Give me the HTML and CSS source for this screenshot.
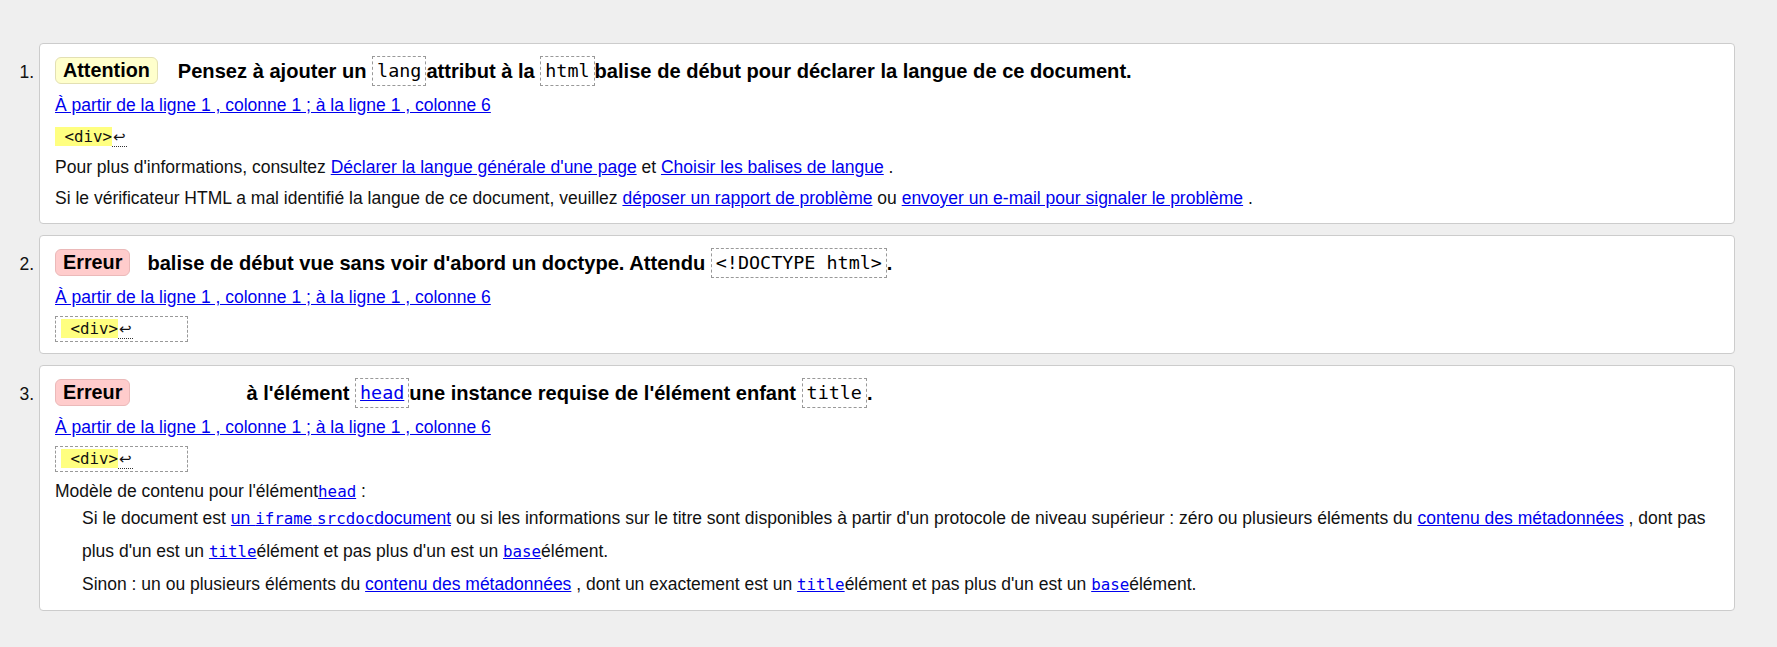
FILE: index.html
```html
<!DOCTYPE html>
<html lang="fr">
<head>
<meta charset="utf-8">
<title>Vérification</title>
<link rel="stylesheet" href="styles.css">
</head>
<body>
<ol class="messages">
  <li class="msg">
    <p class="msg-head"><span class="badge badge-warn">Attention</span><span class="msg-text">Pensez à ajouter un <code class="hcode">lang</code>attribut à la <code class="hcode">html</code>balise de début pour déclarer la langue de ce document.</span></p>
    <p class="line"><a href="#">À partir de la ligne 1 , colonne 1 ; à la ligne 1 , colonne 6</a></p>
    <p class="line"><span class="extract extract-plain"><span class="hl"> &lt;div&gt;</span><span class="lf">↩</span></span></p>
    <p class="line">Pour plus d'informations, consultez <a href="#">Déclarer la langue générale d'une page</a> et <a href="#">Choisir les balises de langue</a> .</p>
    <p class="line">Si le vérificateur HTML a mal identifié la langue de ce document, veuillez <a href="#">déposer un rapport de problème</a> ou <a href="#">envoyer un e-mail pour signaler le problème</a> .</p>
  </li>
  <li class="msg">
    <p class="msg-head"><span class="badge badge-err">Erreur</span><span class="msg-text">balise de début vue sans voir d'abord un doctype. Attendu <code class="hcode">&lt;!DOCTYPE html&gt;</code>.</span></p>
    <p class="line"><a href="#">À partir de la ligne 1 , colonne 1 ; à la ligne 1 , colonne 6</a></p>
    <p class="line line-box"><span class="extract"><span class="hl"> &lt;div&gt;</span><span class="lf">↩</span></span></p>
  </li>
  <li class="msg">
    <p class="msg-head"><span class="badge badge-err badge-wide">Erreur</span><span class="msg-text">à l'élément <code class="hcode"><a href="#">head</a></code>une instance requise de l'élément enfant <code class="hcode">title</code>.</span></p>
    <p class="line"><a href="#">À partir de la ligne 1 , colonne 1 ; à la ligne 1 , colonne 6</a></p>
    <p class="line line-box"><span class="extract"><span class="hl"> &lt;div&gt;</span><span class="lf">↩</span></span></p>
    <p class="line line-model">Modèle de contenu pour l'élément<a href="#"><code class="icode">head</code></a> :</p>
    <div class="model">
      <p class="model-p">Si le document est <a href="#">un <code class="icode">iframe</code> <code class="icode">srcdoc</code>document</a> ou si les informations sur le titre sont disponibles à partir d'un protocole de niveau supérieur : zéro ou plusieurs éléments du <a href="#">contenu des métadonnées</a> , dont pas plus d'un est un <a href="#"><code class="icode">title</code></a>élément et pas plus d'un est un <a href="#"><code class="icode">base</code></a>élément.</p>
      <p class="model-p">Sinon : un ou plusieurs éléments du <a href="#">contenu des métadonnées</a> , dont un exactement est un <a href="#"><code class="icode">title</code></a>élément et pas plus d'un est un <a href="#"><code class="icode">base</code></a>élément.</p>
    </div>
  </li>
</ol>
</body>
</html>
```
FILE: styles.css
```css
html, body {
  margin: 0;
  padding: 0;
  background: #efefef;
}
body {
  font-family: "Liberation Sans", Arial, sans-serif;
  font-size: 17.5px;
  color: #111;
}
a {
  color: #0000ee;
  text-decoration: underline;
}
.messages {
  margin: 0;
  padding: 43px 42px 0 39px;
  list-style: decimal outside;
}
.msg {
  background: #fff;
  border: 1px solid #cccccc;
  border-radius: 4px;
  margin: 0 0 11px;
  padding: 10px 15px 9px;
  line-height: 31px;
}
.msg::marker {
  font-size: 17.5px;
}
.msg p {
  margin: 0;
}
.msg-head {
  line-height: 34px;
  margin-bottom: 2px !important;
  font-weight: bold;
  font-size: 20.1px;
  color: #000;
}
.badge {
  display: inline-block;
  font-size: 19.8px;
  line-height: 25px;
  padding: 0 7px;
  border-radius: 6px;
  border: 1px solid;
  margin-right: 17px;
  vertical-align: 1px;
}
.badge-warn {
  background: #ffffcc;
  border-color: #e3e0b3;
  margin-right: 20px;
}
.badge-err {
  background: #ffcccc;
  border-color: #ebb9b9;
}
.badge-wide {
  margin-right: 116px;
}
.hcode {
  display: inline-block;
  font-family: "DejaVu Sans Mono", monospace;
  font-weight: normal;
  font-size: 18.4px;
  line-height: 28px;
  padding: 0 4px;
  border: 1px dashed #999;
  vertical-align: middle;
  position: relative;
  top: -2px;
}
.line {
  line-height: 31px;
}
.line-model {
  line-height: 22px;
  margin-top: 6px !important;
}
.extract {
  display: inline-block;
  font-family: "DejaVu Sans Mono", monospace;
  font-size: 15.8px;
  line-height: 20px;
  border: 1px dashed #999;
  padding: 2px 54px 2px 5px;
  vertical-align: middle;
}
.extract-plain {
  border: 0;
  padding: 0;
}
.hl {
  background: #ffff80;
  white-space: pre;
}
.lf {
  display: inline-block;
  line-height: 18px;
  border-bottom: 1px dotted #333;
  font-family: "DejaVu Sans", sans-serif;
  font-size: 15px;
  padding: 0 1px;
}
.icode {
  font-family: "DejaVu Sans Mono", monospace;
  font-size: 15.8px;
  line-height: 1;
}
.model {
  padding-left: 27px;
}
.model-p {
  line-height: 33px;
}
```
